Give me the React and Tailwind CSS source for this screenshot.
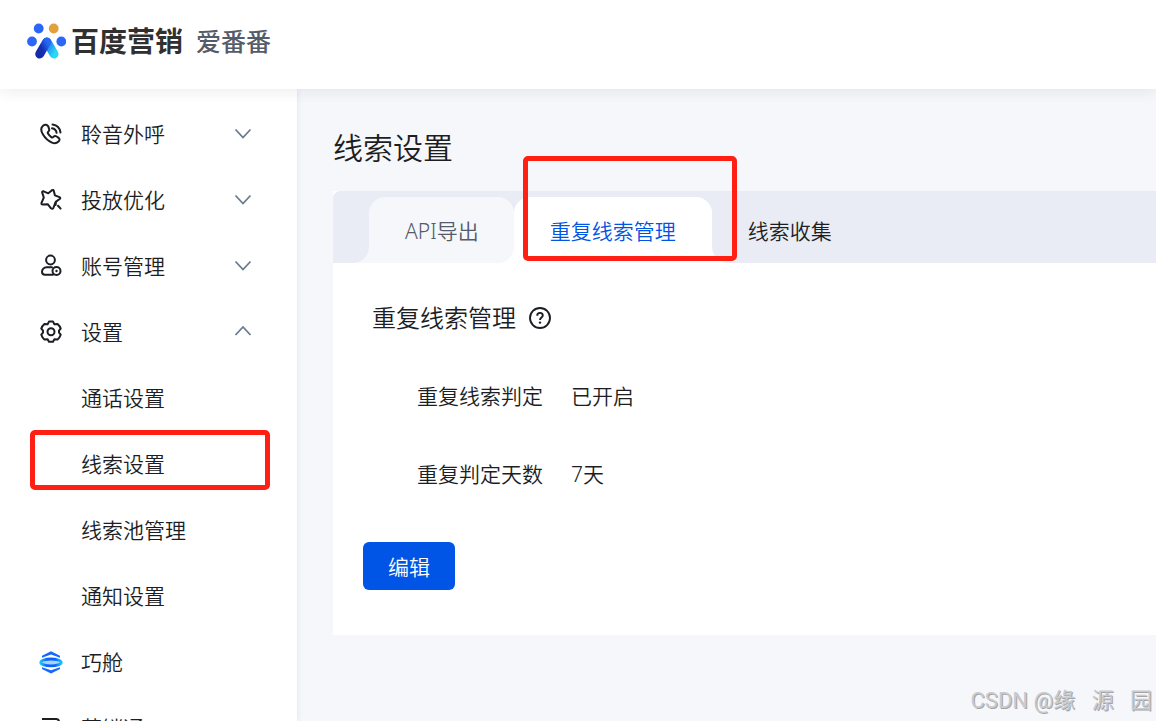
import { useState } from 'react';

const PhoneIcon = () => (
  <svg className="h-6 w-6" viewBox="0 0 24 24" fill="none" stroke="currentColor" strokeWidth="2" strokeLinecap="round" strokeLinejoin="round">
    <path d="M9.400 4.600C8.200 2.700 6 2.200 4.300 3.500 1.800 5.400 1.800 8.900 4 12.500c2.100 3.500 5.400 6.500 9 8.100 2.500 1.100 4.700.7 6.500-1 1.400-1.400 1.400-3-.2-4l-1.700-1.100c-1.200-.7-2.200-.6-3.200.4-.7.7-1.300.7-2.100.2-1.400-.9-2.500-2.100-3.300-3.500-.5-.8-.3-1.400.4-2 1-.9 1.200-1.900.5-3.100z" />
    <path d="M13.500 2.500c4.300.6 7.400 3.700 8 8M13 6.300c2.500.4 4.200 2 4.600 4.500" />
  </svg>
);

const StarIcon = () => (
  <svg className="h-6 w-6" viewBox="0 0 24 24" fill="none" stroke="currentColor" strokeWidth="2" strokeLinecap="round" strokeLinejoin="round">
    <path d="M13 2.300Q14.400 1.300 14.800 3L15.900 7.300 20.500 9.200Q22 10 20.700 11L17 13.600 16.600 17" />
    <path d="M13 2.300L9.300 5.300 4.600 3.300Q3 2.800 3.200 4.600L4.800 9.500 2.500 14.800Q2 16.700 3.900 16.600L8.700 16.200 12 20.300Q13.600 21.600 14.400 19.800L16.600 14" />
    <path d="M19 17.800l2.600 2.800" />
  </svg>
);

const AccountIcon = () => (
  <svg className="h-6 w-6" viewBox="0 0 24 24" fill="none" stroke="currentColor" strokeWidth="2">
    <circle cx="11.500" cy="6" r="4.400" />
    <path d="M13 13.300H7.500a4.500 4.500 0 0 0-4.500 4.500C3 20 4 20.700 6 20.700h8" strokeLinecap="round" />
    <circle cx="17.500" cy="17" r="4" />
    <circle cx="17.500" cy="17" r="1.200" fill="currentColor" stroke="none" />
  </svg>
);

const GearIcon = () => (
  <svg className="h-6 w-6" viewBox="0 0 24 24" fill="none" stroke="currentColor" strokeWidth="2" strokeLinejoin="round">
    <path d="M10 1.600H14L15.400 4.200 18.600 4Q20.800 5.900 21.700 8.500L20 10.600V12.600L21.700 14.700Q20.800 17.500 18.600 19.400L15.400 19.200 14 21.800H10L8.600 19.200 5.400 19.400Q3.200 17.500 2.300 14.700L4 12.600V10.600L2.300 8.500Q3.200 5.900 5.400 4L8.600 4.200z" />
    <circle cx="12" cy="11.700" r="3.500" />
  </svg>
);

const CabinIcon = () => (
  <svg className="h-6 w-6" viewBox="0 0 24 24" fill="none">
    <defs>
      <linearGradient id="cabin" x1="0" y1="0" x2="1" y2="0">
        <stop offset="0" stopColor="#10c4ff" />
        <stop offset="0.300" stopColor="#0b62fb" />
        <stop offset="0.700" stopColor="#0b62fb" />
        <stop offset="1" stopColor="#10c4ff" />
      </linearGradient>
    </defs>
    <path d="M3 7.800V5.800L12 1.300l9 4.500V7.800L12 4.600z" fill="#1768ff" />
    <path d="M3 17.200V19L12 23.600l9-4.600V17.200L12 20.300z" fill="#1768ff" />
    <ellipse cx="12" cy="12.400" rx="10.200" ry="3.400" stroke="url(#cabin)" strokeWidth="2.800" fill="#a9d2ff" />
  </svg>
);

const MarketingIcon = () => (
  <svg className="h-6 w-6" viewBox="0 0 24 24" fill="none" stroke="currentColor" strokeWidth="2">
    <path d="M3 3h14a3 3 0 0 1 3 3v14H3V9h12" />
  </svg>
);

const Chevron = ({ open }) => (
  <svg className="h-5 w-5 text-[#6b7a90]" viewBox="0 0 20 20" fill="none" stroke="currentColor" strokeWidth="1.800">
    <path d={open ? 'M2.500 13l7.500-8 7.500 8' : 'M2.500 5.500l7.500 8 7.500-8'} />
  </svg>
);

const Logo = () => (
  <svg className="h-10 w-10" viewBox="0 0 40 40" fill="none">
    <defs>
      <linearGradient id="logoDark" x1="1" y1="0" x2="0" y2="1">
        <stop offset="0" stopColor="#2468f2" />
        <stop offset="0.600" stopColor="#152fb4" />
        <stop offset="1" stopColor="#152aa8" />
      </linearGradient>
      <linearGradient id="logoCyan" x1="0" y1="0" x2="1" y2="1">
        <stop offset="0" stopColor="#2468f2" />
        <stop offset="1" stopColor="#28d8f5" />
      </linearGradient>
    </defs>
    <circle cx="12.700" cy="7.500" r="4.900" fill="#2b66f6" />
    <circle cx="27.700" cy="7.500" r="4.900" fill="#e2a23b" />
    <circle cx="6" cy="20.500" r="4.900" fill="#2b66f6" />
    <circle cx="35.300" cy="20.500" r="4.900" fill="#2b66f6" />
    <path d="M21 21l7 12" stroke="url(#logoCyan)" strokeWidth="9" strokeLinecap="round" />
    <path d="M20.700 21l-7 12" stroke="url(#logoDark)" strokeWidth="9" strokeLinecap="round" />
  </svg>
);

const HelpIcon = () => (
  <svg className="h-6 w-6" viewBox="0 0 24 24" fill="none" stroke="currentColor" strokeWidth="1.900">
    <circle cx="12" cy="12" r="10" />
    <path d="M9.200 9.700c0-1.800 1.200-2.800 2.800-2.800s2.800 1 2.800 2.600c0 1.900-2.800 2.200-2.800 4.400" />
    <circle cx="12" cy="16.600" r="1.200" fill="currentColor" stroke="none" />
  </svg>
);

const menu = [
  { label: '聆音外呼', icon: PhoneIcon, expandable: true },
  { label: '投放优化', icon: StarIcon, expandable: true },
  { label: '账号管理', icon: AccountIcon, expandable: true },
  { label: '设置', icon: GearIcon, expandable: true, children: ['通话设置', '线索设置', '线索池管理', '通知设置'] },
  { label: '巧舱', icon: CabinIcon },
  { label: '营销通', icon: MarketingIcon },
];

const settings = [
  { label: '重复线索判定', value: '已开启' },
  { label: '重复判定天数', value: '7天' },
];

const Sidebar = () => {
  const [openItem, setOpenItem] = useState('设置');

  return (
    <nav className="w-[297px] shrink-0 overflow-hidden bg-white pt-3 shadow-[0_0_6px_rgba(30,40,80,0.1)]">
      <ul>
        {menu.map(({ label, icon: Icon, expandable, children }) => (
          <li key={label}>
            <button
              onClick={() => expandable && setOpenItem(openItem === label ? null : label)}
              className="flex h-[66px] w-full items-center pl-[39px] pr-11 text-left"
            >
              <Icon />
              <span className="ml-[18px] flex-1">{label}</span>
              {expandable && <Chevron open={openItem === label} />}
            </button>
            {children && openItem === label && (
              <ul>
                {children.map((child) => (
                  <li key={child} className="relative">
                    <a href="#" className="flex h-[66px] items-center pl-[81px]">
                      {child}
                    </a>
                    {child === '线索设置' && (
                      <div className="pointer-events-none absolute -top-px left-[30px] right-[27px] h-[60px] rounded-[5px] border-5 border-[#ff2013]" />
                    )}
                  </li>
                ))}
              </ul>
            )}
          </li>
        ))}
      </ul>
    </nav>
  );
};

const Tabs = () => (
  <div
    role="tablist"
    className="flex h-[72px] rounded-tl-lg bg-[linear-gradient(#e9ecf4_50%,#ffffff_50%)]"
  >
    <div className="w-9 rounded-tl-lg bg-[#f5f7fb]">
      <div className="h-full rounded-tl-lg rounded-br-2xl bg-[#e9ecf4]" />
    </div>
    <button role="tab" aria-selected="false" className="mt-1.5 rounded-2xl rounded-bl-none bg-[#f5f7fb] pl-9 pr-[35px] pt-0.5 text-[#545b69]">
      API导出
    </button>
    <div className="relative mt-1.5 flex">
      <button role="tab" aria-selected="true" className="rounded-t-2xl bg-white px-9 pt-0.5 text-[#0055e6]">
        重复线索管理
      </button>
      <div className="pointer-events-none absolute -right-[25px] -top-[41px] bottom-0.5 left-[9px] rounded-[5px] border-5 border-[#ff2013]" />
    </div>
    <div className="flex flex-1 rounded-bl-2xl bg-[#e9ecf4] pt-1.5">
      <button role="tab" aria-selected="false" className="px-9 pt-0.5">
        线索收集
      </button>
    </div>
  </div>
);

export default function App() {
  return (
    <div className="relative flex h-screen flex-col overflow-hidden bg-[#f5f7fb] font-['Noto_Sans','Noto_Sans_CJK_SC',sans-serif] text-[21px] font-[350] leading-8 text-[#1c1e24]">
      <header className="z-10 flex h-[89px] shrink-0 items-center bg-white pb-2 pl-[26px] shadow-[0_2px_14px_rgba(30,30,40,0.09)]">
        <Logo />
        <span className="ml-[5px] text-[28px] font-bold text-[#303030]">百度营销</span>
        <span className="ml-[13px] text-[25px] font-medium text-[#545b69]">爱番番</span>
      </header>

      <div className="flex min-h-0 flex-1">
        <Sidebar />
        <main className="flex-1 pl-9 pt-9">
          <h1 className="text-[30px] leading-[46px]">线索设置</h1>
          <section className="mt-5 bg-white">
            <Tabs />
            <div className="px-[30px] pb-[45px] pt-[39px]">
              <h2 className="flex items-center gap-3 pl-[9px] text-[24px]">
                重复线索管理
                <HelpIcon />
              </h2>
              <dl className="mt-[46px] flex flex-col gap-[46px] pl-[54px]">
                {settings.map(({ label, value }) => (
                  <div key={label} className="flex gap-7">
                    <dt>{label}</dt>
                    <dd>{value}</dd>
                  </div>
                ))}
              </dl>
              <button className="mt-[52px] h-12 rounded-md bg-[#0055e6] px-[25px] pt-0.5 text-white">编辑</button>
            </div>
          </section>
        </main>
      </div>

      <div className="absolute bottom-1 right-1 z-20 whitespace-pre font-[Roboto,'Noto_Sans_CJK_SC',sans-serif] text-[22px] font-normal text-[#c9cacd] [text-shadow:1px_1px_0_#a5a5a7]">
        CSDN @缘   源   园
      </div>
    </div>
  );
}
